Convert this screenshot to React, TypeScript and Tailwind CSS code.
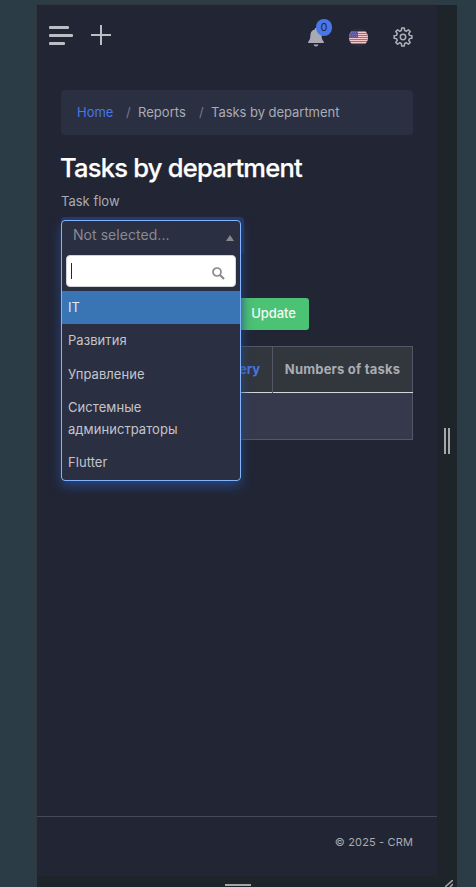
import React from "react";

const departments = ["IT", "Развития", "Управление", "Системные администраторы", "Flutter"];

function Flag() {
  return (
    <svg className="mt-px h-5 w-5" viewBox="0 0 20 20">
      <defs>
        <clipPath id="flag-round">
          <path d="M4 3H15C17.5 3.5 19 6.5 19 9.5S17.5 15.5 15 16H4C1.5 15.5 0 12.5 0 9.5S1.5 3.5 4 3Z" />
        </clipPath>
      </defs>
      <circle cx="9.5" cy="9.5" r="9.5" fill="#2b2b3a" />
      <g clipPath="url(#flag-round)">
        <rect y="3" width="20" height="13" fill="#f4dde0" />
        {[3, 5, 7, 9, 11, 13, 15].map((y) => (
          <rect key={y} y={y} width="20" height="1.15" fill="#f64a58" />
        ))}
        <rect y="3" width="9" height="7" fill="#5c55a5" />
        <path d="M2 4.5h7M1 6.5h8M1 8.5h8" stroke="#7671b5" strokeWidth="1" strokeDasharray="1 1" />
      </g>
    </svg>
  );
}

function Bell() {
  return (
    <svg className="h-[19px] w-4" viewBox="0 0 16 19" fill="#a9abb4">
      <path d="M8 0c.8 0 1.3.6 1.3 1.4 2.8.7 4.3 2.900 4.300 5.900 0 3.500.8 5 2.200 6.500.3.300.2 1.200-.6 1.200H.8c-.8 0-.9-.9-.6-1.200 1.400-1.500 2.200-3 2.200-6.500 0-3 1.500-5.200 4.300-5.900C6.700.6 7.200 0 8 0Z" />
      <path d="M5.7 16.5h4.600c0 1.100-1 2-2.300 2s-2.300-.9-2.300-2Z" />
    </svg>
  );
}

// Outline of the eight-toothed settings wheel: two outer and two inner points per tooth.
const gearPoints = Array.from({ length: 8 }, (_, i) => i * 45)
  .flatMap((a) => [
    [a - 14, 6.7],
    [a - 8.5, 9],
    [a + 8.5, 9],
    [a + 14, 6.7],
  ])
  .map(([a, r]) => {
    const t = (a * Math.PI) / 180;
    return `${(10 + r * Math.sin(t)).toFixed(2)},${(10 - r * Math.cos(t)).toFixed(2)}`;
  })
  .join(" ");

function Gear() {
  return (
    <svg className="ml-6 h-5 w-5" viewBox="0 0 20 20" fill="none" stroke="#aeb0b8" strokeWidth="1.5" strokeLinejoin="round">
      <polygon points={gearPoints} />
      <circle cx="10" cy="10" r="2.7" />
    </svg>
  );
}

function Header() {
  return (
    <header className="flex h-[85px] items-start justify-between pl-3 pr-6 pt-[21px]">
      <div className="flex items-start gap-[18px]">
        <div className="flex flex-col gap-[5px]">
          <span className="h-[3px] w-5 rounded-[1px] bg-[#bdbec4]" />
          <span className="h-[3px] w-6 rounded-[1px] bg-[#bdbec4]" />
          <span className="h-[3px] w-4 rounded-[1px] bg-[#bdbec4]" />
        </div>
        <svg className="-mt-px h-5 w-5" viewBox="0 0 20 20" stroke="#bdbec4" strokeWidth="2">
          <path d="M0 10H20M10 0V20" />
        </svg>
      </div>
      <div className="flex items-start pt-px">
        <div className="relative mr-[25px] mt-px">
          <Bell />
          <span className="absolute -top-[9px] left-2 flex h-[17px] w-4 items-center justify-center rounded-full bg-[#4a77e8] text-[11px] leading-none text-[#222738]">0</span>
        </div>
        <Flag />
        <Gear />
      </div>
    </header>
  );
}

function DepartmentSelect() {
  return (
    <div className="absolute left-0 top-0 h-[261px] w-[180px] rounded shadow-[0_5px_12px_#274681]">
      <div className="absolute -right-[3px] -top-[3px] left-0 h-[38px] rounded bg-[#273966]" />
      <div className="relative h-full overflow-hidden rounded border border-[#82b4ff] bg-[#2b2f42]">
        <div className="flex h-[29px] items-start justify-between pl-[11px] pr-[6px] pt-[3px] text-[14px] leading-[22px] text-[#888a91]">
          <span className="tracking-[0.05px]">Not selected...</span>
          <svg className="mt-[11px] h-[6px] w-2" viewBox="0 0 8 6" fill="#888">
            <path d="M4 0 8 6H0Z" />
          </svg>
        </div>
        <div className="px-1 pb-1 pt-[5px]">
          <div className="flex h-8 items-center justify-between rounded border border-[#ced4da] bg-white pl-1 pr-[10px]">
            <span className="h-4 w-px bg-[#222738]" />
            <svg className="mt-1 h-[13px] w-[13px]" viewBox="0 0 13 13" fill="none" stroke="#888">
              <circle cx="5" cy="5" r="4" strokeWidth="1.7" />
              <path d="m8 8 4 4" strokeWidth="2.2" />
            </svg>
          </div>
        </div>
        <ul className="text-[13px] leading-[22px] tracking-[0.06px]">
          {departments.map((name, i) => (
            <li
              key={name}
              className={
                i === 0
                  ? "h-[33px] bg-[#3974b5] px-1.5 pt-[5px] text-[#e5eaf0]"
                  : i === 1
                    ? "h-[34px] px-1.5 pt-[5px] text-[#c3c5ca]"
                    : i === 3
                      ? "h-[55px] px-1.5 pt-[5px] text-[#c3c5ca]"
                      : "h-[33px] px-1.5 pt-[5px] text-[#c3c5ca]"
              }
            >
              {name}
            </li>
          ))}
        </ul>
      </div>
    </div>
  );
}

export default function App() {
  return (
    <div className="flex h-[887px] w-[476px] flex-col overflow-hidden bg-[#2c3c46] pl-9 pt-1 font-['Inter',sans-serif] text-[13px] text-[#a9acb3]">
      <div className="flex h-[872px] shrink-0">
        <div className="flex w-[401px] flex-col border-l border-t border-[#30383a] bg-[#222534]">
          <Header />
          <main className="px-6">
            <nav className="flex h-[45px] items-center rounded bg-[#2b2f42] px-4">
              <span className="w-[49px] text-[#4876e6]">Home</span>
              <span className="w-3 text-[#757984]">/</span>
              <span className="w-[61px] tracking-[0.05px]">Reports</span>
              <span className="w-3 text-[#757984]">/</span>
              <span className="tracking-[-0.04px]">Tasks by department</span>
            </nav>
            <h1 className="-ml-px mt-4 whitespace-nowrap text-[25.5px] font-medium leading-[34px] tracking-[-0.76px] text-white [-webkit-text-stroke:0.25px_white]">Tasks by department</h1>
            <label className="mt-1.5 block leading-5">Task flow</label>
            <div className="relative mt-[9px] h-[78px]">
              <DepartmentSelect />
            </div>
            <button className="ml-[169px] flex h-8 w-[79px] items-center justify-center rounded-[3px] bg-[#4cc274] pl-[8px] text-[13px] font-medium tracking-[-0.05px] text-[#f4f8f5]">Update</button>
            <table className="mt-4 h-[94px] w-[352px] table-fixed border-collapse border border-[#535767]">
              <thead className="border-b border-[#d5d7dc] bg-[#32363d]">
                <tr className="h-[46px]">
                  <th className="w-[211px] border-r border-[#535767] pr-3 text-right font-bold text-[#4876e6]">Without delivery</th>
                  <th className="whitespace-nowrap font-bold tracking-[0.2px]">Numbers of tasks</th>
                </tr>
              </thead>
              <tbody className="bg-[#36394b]">
                <tr className="h-[47px]">
                  <td colSpan={2} />
                </tr>
              </tbody>
            </table>
          </main>
          <footer className="mt-auto flex h-[60px] items-start justify-end border-t border-[#44485a] pr-6 pt-[17px] text-[11px] leading-4 tracking-[0.14px]">© 2025 - CRM</footer>
        </div>
        <div className="mt-px flex w-5 items-center justify-center gap-[2px] bg-[#1e252a]">
          <span className="h-[26px] w-[2px] bg-[#a5a7a8]" />
          <span className="h-[26px] w-[2px] bg-[#a5a7a8]" />
        </div>
      </div>
      <div className="ml-px flex h-[11px] w-[420px] items-end justify-between bg-[#1e252a] pl-[188px]">
        <span className="mb-px h-[2px] w-[26px] bg-[#a5a7a8]" />
        <svg className="mr-1 h-[7px] w-2" viewBox="0 0 8 7" stroke="#a5a7a8" strokeWidth="1.5">
          <path d="M0 7 8 0M5 7l3-3" />
        </svg>
      </div>
    </div>
  );
}
